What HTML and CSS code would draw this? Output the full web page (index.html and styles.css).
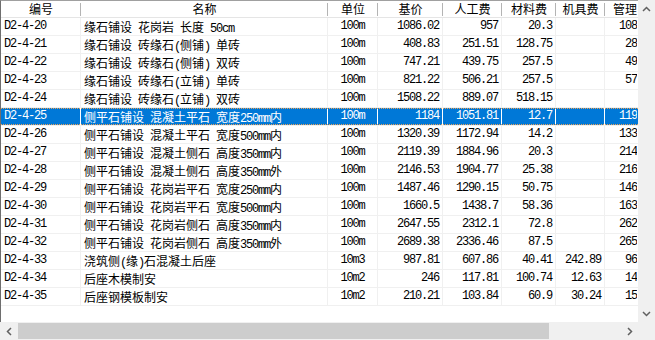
FILE: index.html
```html
<!DOCTYPE html>
<html lang="zh-CN">
<head>
<meta charset="utf-8">
<title>定额列表</title>
<link rel="stylesheet" href="styles.css">
</head>
<body>
<div class="ctl">
  <div class="view">
    <div class="head">
      <span class="h c1">编号</span>
      <span class="h c2">名称</span>
      <span class="h c3">单位</span>
      <span class="h c4">基价</span>
      <span class="h c5">人工费</span>
      <span class="h c6">材料费</span>
      <span class="h c7">机具费</span>
      <span class="h c8">管理</span>
    </div>
    <div class="row"><span class="c c1 m">D2-4-20</span><span class="c c2">缘石铺设<span class="m"> </span>花岗岩<span class="m"> </span>长度<span class="m"> 50cm</span></span><span class="c c3 m">100m</span><span class="c c4 m">1086.02</span><span class="c c5 m">957</span><span class="c c6 m">20.3</span><span class="c c7 m"></span><span class="c c8 m">108</span></div>
    <div class="row"><span class="c c1 m">D2-4-21</span><span class="c c2">缘石铺设<span class="m"> </span>砖缘石<span class="m">(</span>侧铺<span class="m">) </span>单砖</span><span class="c c3 m">100m</span><span class="c c4 m">408.83</span><span class="c c5 m">251.51</span><span class="c c6 m">128.75</span><span class="c c7 m"></span><span class="c c8 m">28</span></div>
    <div class="row"><span class="c c1 m">D2-4-22</span><span class="c c2">缘石铺设<span class="m"> </span>砖缘石<span class="m">(</span>侧铺<span class="m">) </span>双砖</span><span class="c c3 m">100m</span><span class="c c4 m">747.21</span><span class="c c5 m">439.75</span><span class="c c6 m">257.5</span><span class="c c7 m"></span><span class="c c8 m">49</span></div>
    <div class="row"><span class="c c1 m">D2-4-23</span><span class="c c2">缘石铺设<span class="m"> </span>砖缘石<span class="m">(</span>立铺<span class="m">) </span>单砖</span><span class="c c3 m">100m</span><span class="c c4 m">821.22</span><span class="c c5 m">506.21</span><span class="c c6 m">257.5</span><span class="c c7 m"></span><span class="c c8 m">57</span></div>
    <div class="row"><span class="c c1 m">D2-4-24</span><span class="c c2">缘石铺设<span class="m"> </span>砖缘石<span class="m">(</span>立铺<span class="m">) </span>双砖</span><span class="c c3 m">100m</span><span class="c c4 m">1508.22</span><span class="c c5 m">889.07</span><span class="c c6 m">518.15</span><span class="c c7 m"></span><span class="c c8 m"></span></div>
    <div class="row sel"><span class="c c1 m">D2-4-25</span><span class="c c2">侧平石铺设<span class="m"> </span>混凝土平石<span class="m"> </span>宽度<span class="m">250mm</span>内</span><span class="c c3 m">100m</span><span class="c c4 m">1184</span><span class="c c5 m">1051.81</span><span class="c c6 m">12.7</span><span class="c c7 m"></span><span class="c c8 m">119</span></div>
    <div class="row"><span class="c c1 m">D2-4-26</span><span class="c c2">侧平石铺设<span class="m"> </span>混凝土平石<span class="m"> </span>宽度<span class="m">500mm</span>内</span><span class="c c3 m">100m</span><span class="c c4 m">1320.39</span><span class="c c5 m">1172.94</span><span class="c c6 m">14.2</span><span class="c c7 m"></span><span class="c c8 m">133</span></div>
    <div class="row"><span class="c c1 m">D2-4-27</span><span class="c c2">侧平石铺设<span class="m"> </span>混凝土侧石<span class="m"> </span>高度<span class="m">350mm</span>内</span><span class="c c3 m">100m</span><span class="c c4 m">2119.39</span><span class="c c5 m">1884.96</span><span class="c c6 m">20.3</span><span class="c c7 m"></span><span class="c c8 m">214</span></div>
    <div class="row"><span class="c c1 m">D2-4-28</span><span class="c c2">侧平石铺设<span class="m"> </span>混凝土侧石<span class="m"> </span>高度<span class="m">350mm</span>外</span><span class="c c3 m">100m</span><span class="c c4 m">2146.53</span><span class="c c5 m">1904.77</span><span class="c c6 m">25.38</span><span class="c c7 m"></span><span class="c c8 m">216</span></div>
    <div class="row"><span class="c c1 m">D2-4-29</span><span class="c c2">侧平石铺设<span class="m"> </span>花岗岩平石<span class="m"> </span>宽度<span class="m">250mm</span>内</span><span class="c c3 m">100m</span><span class="c c4 m">1487.46</span><span class="c c5 m">1290.15</span><span class="c c6 m">50.75</span><span class="c c7 m"></span><span class="c c8 m">146</span></div>
    <div class="row"><span class="c c1 m">D2-4-30</span><span class="c c2">侧平石铺设<span class="m"> </span>花岗岩平石<span class="m"> </span>宽度<span class="m">500mm</span>内</span><span class="c c3 m">100m</span><span class="c c4 m">1660.5</span><span class="c c5 m">1438.7</span><span class="c c6 m">58.36</span><span class="c c7 m"></span><span class="c c8 m">163</span></div>
    <div class="row"><span class="c c1 m">D2-4-31</span><span class="c c2">侧平石铺设<span class="m"> </span>花岗岩侧石<span class="m"> </span>高度<span class="m">350mm</span>内</span><span class="c c3 m">100m</span><span class="c c4 m">2647.55</span><span class="c c5 m">2312.1</span><span class="c c6 m">72.8</span><span class="c c7 m"></span><span class="c c8 m">262</span></div>
    <div class="row"><span class="c c1 m">D2-4-32</span><span class="c c2">侧平石铺设<span class="m"> </span>花岗岩侧石<span class="m"> </span>高度<span class="m">350mm</span>外</span><span class="c c3 m">100m</span><span class="c c4 m">2689.38</span><span class="c c5 m">2336.46</span><span class="c c6 m">87.5</span><span class="c c7 m"></span><span class="c c8 m">265</span></div>
    <div class="row"><span class="c c1 m">D2-4-33</span><span class="c c2">浇筑侧<span class="m">(</span>缘<span class="m">)</span>石混凝土后座</span><span class="c c3 m">10m3</span><span class="c c4 m">987.81</span><span class="c c5 m">607.86</span><span class="c c6 m">40.41</span><span class="c c7 m">242.89</span><span class="c c8 m">96</span></div>
    <div class="row"><span class="c c1 m">D2-4-34</span><span class="c c2">后座木模制安</span><span class="c c3 m">10m2</span><span class="c c4 m">246</span><span class="c c5 m">117.81</span><span class="c c6 m">100.74</span><span class="c c7 m">12.63</span><span class="c c8 m">14</span></div>
    <div class="row"><span class="c c1 m">D2-4-35</span><span class="c c2">后座钢模板制安</span><span class="c c3 m">10m2</span><span class="c c4 m">210.21</span><span class="c c5 m">103.84</span><span class="c c6 m">60.9</span><span class="c c7 m">30.24</span><span class="c c8 m">15</span></div>
  </div>
  <div class="vscroll">
    <span class="arrow"><svg width="9" height="6" viewBox="0 0 9 6"><path d="M1 5 L4.5 1.5 L8 5" fill="none" stroke="#606060" stroke-width="1.5"/></svg></span>
    <span class="arrow"><svg width="9" height="6" viewBox="0 0 9 6"><path d="M1 1 L4.5 4.5 L8 1" fill="none" stroke="#606060" stroke-width="1.5"/></svg></span>
  </div>
  <div class="hscroll">
    <span class="arrow"><svg width="6" height="9" viewBox="0 0 6 9"><path d="M5 1 L1.5 4.5 L5 8" fill="none" stroke="#606060" stroke-width="1.5"/></svg></span>
    <span class="track"><span class="thumb"></span></span>
    <span class="arrow"><svg width="6" height="9" viewBox="0 0 6 9"><path d="M1 1 L4.5 4.5 L1 8" fill="none" stroke="#606060" stroke-width="1.5"/></svg></span>
  </div>
  <div class="corner"></div>
</div>
</body>
</html>
```

FILE: styles.css
```css
* {
  box-sizing: border-box;
  margin: 0;
  padding: 0;
}

html, body {
  width: 655px;
  height: 340px;
  overflow: hidden;
  background: #ffffff;
}

body {
  font-family: "Noto Sans CJK SC", "Noto Sans", sans-serif;
  font-size: 12px;
  color: #000000;
}

.ctl {
  display: grid;
  grid-template-columns: 638px 17px;
  grid-template-rows: 322px 18px;
  width: 655px;
  height: 340px;
}

.view {
  overflow: hidden;
  border-left: 1px solid #6e6e6e;
  border-top: 1px solid #a0a0a0;
  background: #ffffff;
}

.head {
  display: flex;
  height: 17px;
  border-bottom: 1px solid #e5e5e5;
}

.h {
  flex: none;
  position: relative;
  text-align: center;
  line-height: 16px;
  white-space: nowrap;
  overflow: hidden;
}

.h::after {
  content: "";
  position: absolute;
  right: 0;
  top: 2px;
  bottom: 1px;
  width: 1px;
  background: #b4b4b4;
}

.h.c8::after {
  display: none;
}

.row {
  display: flex;
  height: 18px;
  border-bottom: 1px solid #f0f0f0;
  position: relative;
}

.c {
  flex: none;
  height: 17px;
  line-height: 17px;
  white-space: nowrap;
  overflow: hidden;
  border-right: 1px solid #f0f0f0;
  padding: 0 3px;
}

.m {
  font-family: "Liberation Mono", "DejaVu Sans Mono", monospace;
  font-size: 12px;
  letter-spacing: -1.2px;
}

.c1 { width: 80px; }
.c2 { width: 247px; }
.c3 { width: 50px; text-align: center; }
.c4 { width: 65px; text-align: right; }
.c5 { width: 59px; text-align: right; }
.c6 { width: 54px; text-align: right; }
.c7 { width: 49px; text-align: right; }
.c8 { width: 32px; text-align: right; padding: 0; border-right: none; }

.h.c3, .h.c4, .h.c5, .h.c6, .h.c7 { text-align: center; }
.h.c8 { text-align: left; padding-left: 8px; }

.row.sel {
  background: #0078d7;
  color: #ffffff;
}

.row.sel .c {
  border-right-color: #ffffff;
}

.row.sel::after {
  content: "";
  position: absolute;
  left: 0;
  right: 0;
  top: 0;
  bottom: 0;
  border-top: 1px dotted #e9a35a;
  border-bottom: 1px dotted #e9a35a;
  pointer-events: none;
}

.vscroll {
  background: #f0f0f0;
  display: flex;
  flex-direction: column;
  justify-content: space-between;
  align-items: center;
}

.vscroll .arrow {
  display: flex;
  align-items: center;
  justify-content: center;
  width: 17px;
  height: 17px;
}

.hscroll {
  background: #f0f0f0;
  display: flex;
  align-items: stretch;
}

.hscroll .arrow {
  flex: none;
  display: flex;
  align-items: center;
  justify-content: center;
  width: 17px;
}

.hscroll .track {
  flex: 1;
  display: flex;
  align-items: stretch;
  padding: 1px 0;
}

.hscroll .thumb {
  width: 531px;
  margin-left: 1px;
  background: #cdcdcd;
}

.corner {
  background: #f0f0f0;
}
```
